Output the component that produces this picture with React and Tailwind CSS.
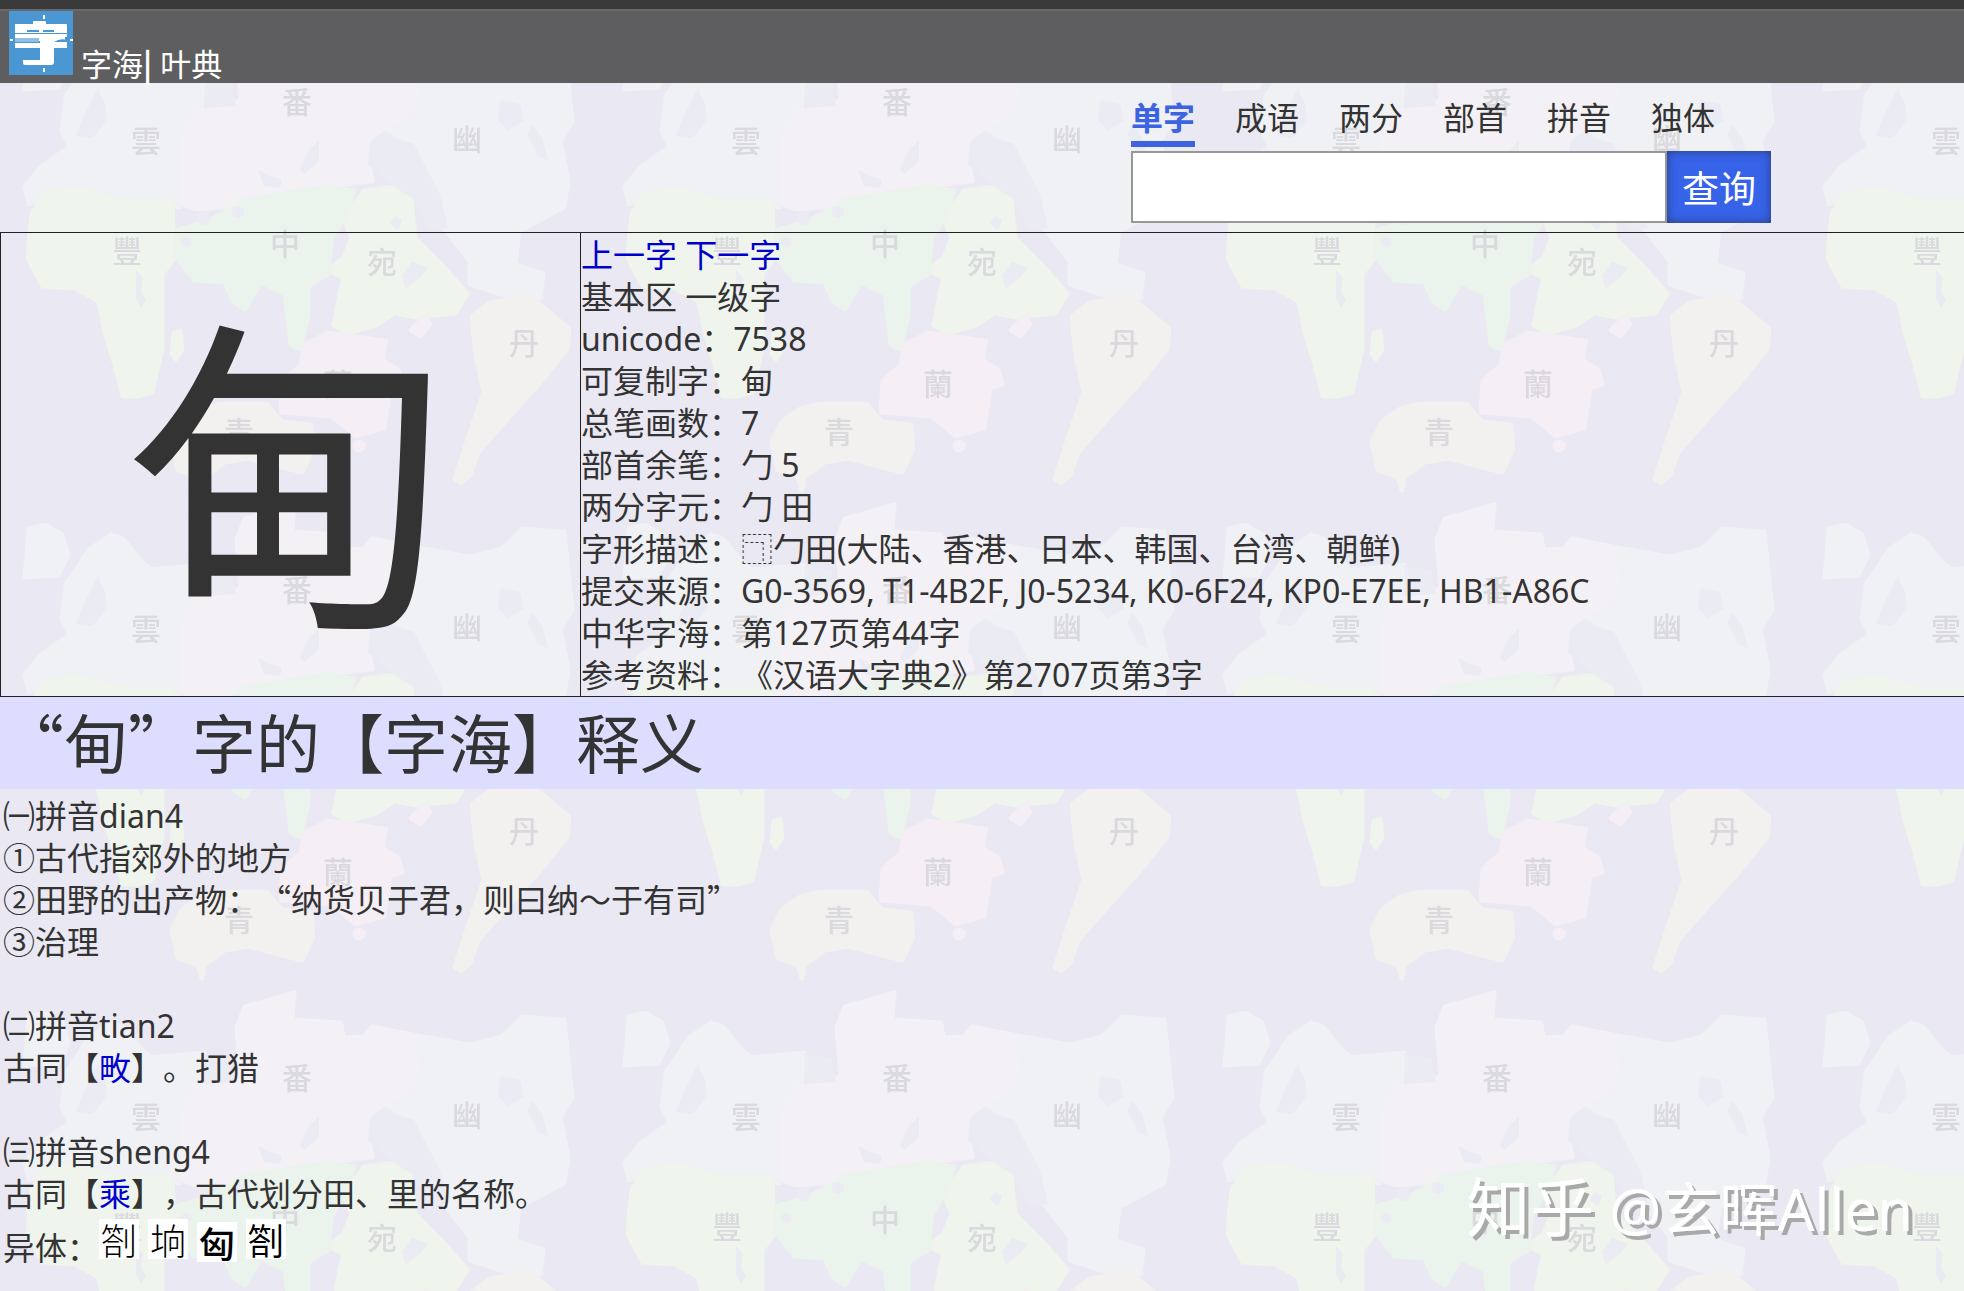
const tabs = ['单字', '成语', '两分', '部首', '拼音', '独体'];

const facts = [
  ['unicode：', '7538'],
  ['可复制字：', '甸'],
  ['总笔画数：', '7'],
  ['部首余笔：', '勹 5'],
  ['两分字元：', '勹 田'],
  ['字形描述：', '⿹勹田(大陆、香港、日本、韩国、台湾、朝鲜)'],
  ['提交来源：', 'G0-3569, T1-4B2F, J0-5234, K0-6F24, KP0-E7EE, HB1-A86C'],
  ['中华字海：', '第127页第44字'],
  ['参考资料：', '《汉语大字典2》第2707页第3字'],
];

const variants = [
  { text: '劄', className: 'font-light' },
  { text: '垧', className: 'font-light' },
  { text: '匈', className: 'mt-[3px] font-medium' },
  { text: '劄', className: 'font-normal' },
];

const labels = [
  { text: '雲', x: 146, y: 133 },
  { text: '番', x: 297, y: 94 },
  { text: '幽', x: 467, y: 131 },
  { text: '豐', x: 127, y: 243 },
  { text: '中', x: 285, y: 236 },
  { text: '宛', x: 382, y: 254 },
  { text: '丹', x: 524, y: 335 },
  { text: '蘭', x: 338, y: 376 },
  { text: '青', x: 239, y: 424 },
];

function MapBackground() {
  return (
    <svg className="absolute inset-0 -z-10 h-full w-full" aria-hidden="true">
      <defs>
        <pattern id="map" x="0" y="8" width="600" height="488" patternUnits="userSpaceOnUse">
          <rect width="600" height="488" fill="#eae8f2" />
          <g strokeLinejoin="round" strokeWidth="5">
            <g fill="#f0f1f5" stroke="#f0f1f5">
              <path d="M29 33 45 29 62 39 68 59 58 79 25 81 27 59Z" />
              <path d="M111 39 123 43 139 63 151 74 204 69 204 96 180 129 180 199 127 193 78 179 29 196 25 179 41 159 70 139 62 123 66 89 90 53Z" />
              <path d="M413 51 470 61 502 53 523 33 564 36 572 113 560 133 568 173 564 199 519 223 515 256 543 266 540 290 511 289 470 276 470 253 441 216 437 179 421 156 413 133 376 139 372 126 413 103Z" />
            </g>
            <path fill="#f3f1f5" stroke="#f3f1f5" d="M294 9 292 36 341 39 343 54 364 53 372 43 413 51 417 83 413 103 372 129 368 149 372 173 327 178 233 198 196 201 182 196 182 129 196 103 241 93 237 43 245 23 270 16Z" />
            <g fill="#eff4ec" stroke="#eff4ec">
              <path d="M32 206 43 187 75 181 119 193 172 193 174 250 162 266 162 309 162 341 152 384 138 388 123 388 115 357 105 325 99 293 75 280 43 278 28 250 30 222Z" />
              <path d="M174 325 180 323 182 341 176 351 172 345Z" />
              <path d="M344 210 364 183 395 179 411 191 415 230 443 258 467 286 455 305 415 309 395 305 376 317 348 325 334 317 340 286 344 270 328 262 344 250 352 230Z" />
            </g>
            <path fill="#ebf3ed" stroke="#ebf3ed" d="M178 222 206 214 245 193 328 179 354 183 344 210 332 230 328 266 308 278 308 309 300 341 291 337 285 286 261 274 245 301 233 293 225 274 194 272 178 250Z" />
            <g fill="#f5eef5" stroke="#f5eef5">
              <path d="M304 337 328 325 386 333 382 352 398 362 402 376 390 380 384 420 356 428 332 408 281 404 283 373 301 357Z" />
              <path d="M411 322 426 308 430 316 420 328Z" />
              <circle cx="359" cy="438" r="4" />
            </g>
            <g fill="#f3f1ef" stroke="#f3f1ef">
              <path d="M200 401 221 396 266 396 282 414 311 417 313 441 302 464 274 457 249 450 225 454 204 469 202 482 198 469 178 462 172 434 182 414Z" />
              <path d="M472 309 490 295 530 289 550 305 569 321 567 341 542 372 510 408 478 444 470 467 461 475 455 471 469 428 484 384 476 349Z" />
            </g>
          </g>
          <g fill="#ebebf3">
            <path d="M98 80 105 96 108 112 92 130 76 128 86 104Z" />
            <path d="M319 132 319 153 305 166 300 162 308 144Z" />
            <path d="M258 162 270 168 282 172 280 180 264 178Z" />
            <path d="M500 92 520 96 524 112 508 122 498 112Z" />
            <path d="M532 116 542 130 548 152 538 148 528 128Z" />
            <path d="M385 122 396 130 414 136 426 160 440 186 448 220 430 222 412 190 384 172 368 156 370 134Z" />
            <path d="M395 208 402 212 398 222 390 216Z" />
            <path d="M136 262 143 270 141 284 146 292 141 300 136 290Z" />
            <path d="M412 254 428 260 418 272 406 280 402 268Z" />
            <circle cx="204" cy="210" r="7" />
            <circle cx="238" cy="204" r="6" />
            <circle cx="186" cy="234" r="5" />
            <path d="M205 70 232 74 236 98 204 100Z" />
          </g>
          <g fill="#d9d9de" fontFamily="'Noto Sans CJK TC', sans-serif" fontSize="30" fontWeight="500" textAnchor="middle">
            {labels.map((label) => (
              <text key={label.text} x={label.x} y={label.y + 11}>
                {label.text}
              </text>
            ))}
          </g>
        </pattern>
      </defs>
      <rect width="100%" height="100%" fill="url(#map)" />
    </svg>
  );
}

function Logo() {
  return (
    <svg viewBox="0 0 64 64" className="size-16" aria-hidden="true">
      <rect width="64" height="64" fill="#4b97d3" />
      <g fill="#fff">
        <path d="M24 11q0-1 1-1h11q1 0 1 1v2h20q1 0 1 1v12h-2v4l2 1v6H45v14q0 3-3 3H16q-2 0-2-2v-3h17V37H6v-5h25v-2H6V13h18Z" />
        <path d="M34 4h2v4h-2zM34 57h2v4h-2zM1 28h3v2H1zM61 28h3v2h-3z" />
      </g>
      <path d="M18 19h12v2H18zM34 19h11v2H34zM6 22h52v1H6zM6 31h25v1H6zM45 31q6-4 13-2v2z" fill="#4b97d3" />
      <path d="M6 27h24v4H6z" fill="#8fbfe6" />
    </svg>
  );
}

// Quotation marks take a full character cell, so they skip the Latin font.
function Quote({ children }) {
  return <span className="font-['Noto_Sans_CJK_SC',sans-serif] leading-none">{children}</span>;
}

function App() {
  return (
    <main
      lang="zh-CN"
      className="relative isolate min-h-screen overflow-hidden font-['Noto_Sans','Noto_Sans_CJK_SC',sans-serif] text-[32px] leading-[42px] text-[#333] [text-spacing-trim:space-all]"
    >
      <MapBackground />

      <header className="flex h-[83px] items-end gap-2 border-t-[9px] border-[#3a3a3a] bg-[#5e5e60] pb-2 pl-[9px] text-white shadow-[inset_0_2px_0_#69696b]">
        <Logo />
        <h1 className="-mb-2 text-[31px] leading-[38px]">
          字海<b className="font-['Noto_Sans_CJK_SC',sans-serif] leading-none">|</b> 叶典
        </h1>
      </header>

      <section className="flex h-[149px] justify-end pr-[193px]">
        <form className="w-[640px]" onSubmit={(event) => event.preventDefault()}>
          <nav className="flex h-16 gap-10 pt-[14px]">
            {tabs.map((tab, index) => (
              <a
                key={tab}
                href="#"
                className={index === 0 ? 'h-[50px] border-b-[6px] border-[#3c64e0] font-bold text-[#3c64e0]' : 'h-[50px]'}
              >
                {tab}
              </a>
            ))}
          </nav>
          <div className="mt-1 flex h-[72px]">
            <input aria-label="查询内容" className="min-w-0 flex-1 border-2 border-[#979797] bg-white px-2 outline-none" />
            <button
              type="submit"
              className="w-[104px] bg-[#3763e9] pt-1 text-[37px] text-white shadow-[inset_0_0_10px_#2c3c78]"
            >
              查询
            </button>
          </div>
        </form>
      </section>

      <section className="flex border-y border-l border-[#222]">
        <div className="flex w-[580px] items-center justify-center border-r border-[#222] pt-5 pr-1 text-[328px] leading-none">甸</div>
        <div className="flex-1 pt-px">
          <p className="text-[#0000cc]">
            <a href="#">上一字</a> <a href="#">下一字</a>
          </p>
          <p>基本区 一级字</p>
          {facts.map(([name, value]) => (
            <p key={name}>
              {name}
              {value}
            </p>
          ))}
        </div>
      </section>

      <h2 className="h-[92px] bg-[#ddddff] text-[64px] leading-[93px]">
        <Quote>“</Quote>甸<Quote>”</Quote>字的【字海】释义
      </h2>

      <article className="px-[3px] pt-[6px]">
        <p>㈠拼音dian4</p>
        <p>①古代指郊外的地方</p>
        <p>
          ②田野的出产物：<Quote>“</Quote>纳货贝于君，则曰纳～于有司<Quote>”</Quote>
        </p>
        <p className="mb-[42px]">③治理</p>
        <p>㈡拼音tian2</p>
        <p className="mb-[42px]">
          古同【<a href="#" className="text-[#0000cc]">畋</a>】。打猎
        </p>
        <p>㈢拼音sheng4</p>
        <p>
          古同【<a href="#" className="text-[#0000cc]">乘</a>】，古代划分田、里的名称。
        </p>
        <div className="flex items-start pt-1">
          <span className="pt-2">异体：</span>
          <ul className="-ml-16 flex gap-[9px] pl-16 font-['Noto_Sans_CJK_SC',sans-serif] text-[36px] leading-10 text-black">
            {variants.map((variant, index) => (
              <li key={index} className={variant.className}>
                <span className="block size-10 bg-white text-center">{variant.text}</span>
              </li>
            ))}
          </ul>
        </div>
      </article>

      <p className="absolute right-[51px] bottom-[50px] text-[58px] leading-[64px] text-white [text-shadow:4px_4px_0_#a9a9a9]">
        <span className="text-[64px]">知乎</span> @玄晖Allen
      </p>
    </main>
  );
}

export default App;
